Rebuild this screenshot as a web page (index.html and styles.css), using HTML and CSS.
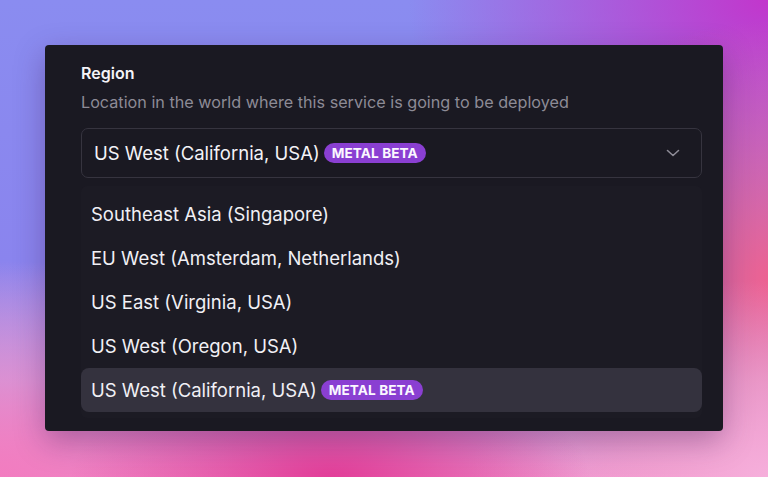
FILE: index.html
```html
<!DOCTYPE html>
<html lang="en">
<head>
    <meta charset="UTF-8">
    <meta name="viewport" content="width=device-width, initial-scale=1.0">
    <title>Region</title>
    <link rel="stylesheet" href="styles.css">
</head>
<body>
    <div class="card">
        <div class="field-label">Region</div>
        <div class="field-hint">Location in the world where this service is going to be deployed</div>

        <div class="select">
            <span class="select-value">US West (California, USA)</span>
            <span class="badge">METAL BETA</span>
            <svg class="chevron" width="16" height="16" viewBox="0 0 16 16" fill="none">
                <path d="M2.5 5.5 L8 10.5 L13.5 5.5" stroke="currentColor" stroke-width="1.6" stroke-linecap="round" stroke-linejoin="round"/>
            </svg>
        </div>

        <ul class="options">
            <li class="option">Southeast Asia (Singapore)</li>
            <li class="option">EU West (Amsterdam, Netherlands)</li>
            <li class="option">US East (Virginia, USA)</li>
            <li class="option">US West (Oregon, USA)</li>
            <li class="option active">US West (California, USA) <span class="badge">METAL BETA</span></li>
        </ul>
    </div>
</body>
</html>
```

FILE: styles.css
```css
html, body {
    height: 100%;
}
body {
    margin: 0;
    font-family: Inter, "Noto Sans", sans-serif;
    overflow: hidden;
    background-color: #a070e0;
    background-image:
        radial-gradient(ellipse 260px 120px at 330px 480px, #e23c98 0%, rgba(226, 60, 152, 0) 100%),
        radial-gradient(ellipse 300px 200px at 770px 480px, #f6b0dc 0%, rgba(246, 176, 220, 0) 100%),
        radial-gradient(ellipse 280px 220px at 0px 480px, #f27cc0 0%, rgba(242, 124, 192, 0) 100%),
        radial-gradient(ellipse 300px 260px at 780px 280px, #f0608e 0%, rgba(240, 96, 142, 0) 100%),
        radial-gradient(ellipse 360px 260px at 768px 0px, #c236cc 0%, rgba(194, 54, 204, 0) 100%),
        linear-gradient(180deg, #8a8cf0 0%, #8a84ee 55%, #c0a8e8 80%, #ec8cc8 100%);
}
.card {
    margin: 45px 45px 0 45px;
    height: 386px;
    box-sizing: border-box;
    padding: 18px 21px 0 36px;
    background: #1a1922;
    border-radius: 4px;
    box-shadow: 0 10px 30px rgba(60, 20, 80, 0.35);
    overflow: hidden;
}
.field-label {
    color: #f4f3f7;
    font-size: 16px;
    font-weight: 600;
    line-height: 20px;
}
.field-hint {
    margin-top: 7px;
    color: #8d8b96;
    font-size: 16.2px;
    line-height: 24px;
}
.select {
    margin-top: 14px;
    height: 50px;
    box-sizing: border-box;
    border: 1px solid #36343f;
    border-radius: 7px;
    padding: 0 20px 0 12px;
    display: flex;
    align-items: center;
    gap: 4px;
}
.select-value {
    color: #f4f3f7;
    font-size: 18.5px;
}
.chevron {
    margin-left: auto;
    color: #8d8b96;
}
.badge {
    display: inline-flex;
    align-items: center;
    height: 20px;
    padding: 0 8px;
    border-radius: 10px;
    background: #8a3fd2;
    color: #fbf8ff;
    font-size: 13.6px;
    font-weight: 700;
    letter-spacing: 0.1px;
}
.options {
    list-style: none;
    margin: 8px 0 0 0;
    padding: 6px 0;
    background: #1c1b24;
    border-radius: 6px;
}
.option {
    height: 44px;
    padding: 0 10px;
    display: flex;
    align-items: center;
    gap: 4px;
    color: #f1f0f5;
    font-size: 18.5px;
    border-radius: 8px;
}
.option.active {
    background: #34323e;
}
```
